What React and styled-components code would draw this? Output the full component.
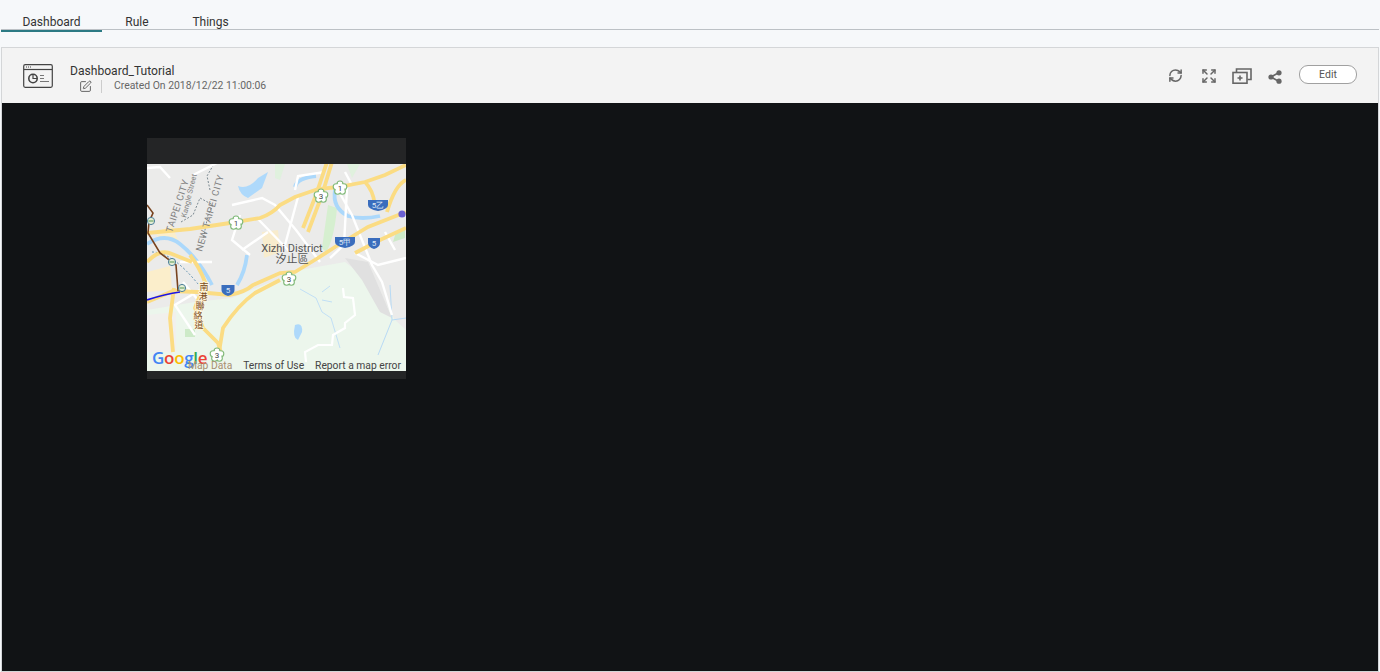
import React from "react";
import styled, { createGlobalStyle } from "styled-components";
import { SquarePen, RefreshCw, Expand } from "lucide-react";

const GlobalStyle = createGlobalStyle`
  html, body {
    margin: 0;
    padding: 0;
    height: 100%;
    background: #f6f8fa;
    font-family: Roboto, "Liberation Sans", sans-serif;
    overflow: hidden;
  }
`;

const Page = styled.div`
  width: 1380px;
  height: 672px;
  display: flex;
  flex-direction: column;
`;

const Tabs = styled.nav`
  display: flex;
  height: 29px;
  margin: 0 1px;
  border-bottom: 1px solid #bcc1c5;
`;

const Tab = styled.div`
  width: ${(p) => p.$width}px;
  height: 32px;
  box-sizing: border-box;
  padding-top: 15px;
  text-align: center;
  font-size: 12px;
  line-height: 15px;
  color: #333;
  border-bottom: 2px solid ${(p) => (p.$active ? "#2b7a84" : "transparent")};
`;

const Panel = styled.section`
  flex: 1;
  margin: 18px 2px 1px 2px;
  display: flex;
  flex-direction: column;
  min-height: 0;
  outline: 1px solid #d4d6d8;
`;

const Header = styled.header`
  height: 55px;
  flex-shrink: 0;
  background: #f3f3f3;
  display: flex;
  align-items: center;
  padding: 0 21px 0 21px;
  box-sizing: border-box;
`;

const Info = styled.div`
  margin-left: 17px;
  display: flex;
  flex-direction: column;
  padding-top: 6px;
`;

const Title = styled.div`
  font-size: 12.1px;
  line-height: 15px;
  color: #333;
`;

const Meta = styled.div`
  display: flex;
  align-items: center;
  padding-left: 9px;
  color: #666;
  font-size: 10.4px;
  line-height: 14px;
`;

const Divider = styled.span`
  width: 1px;
  height: 13px;
  background: #ccc;
  margin: 0 12px 0 9px;
`;

const Actions = styled.div`
  margin-left: auto;
  display: flex;
  align-items: center;
`;

const IconSlot = styled.span`
  width: ${(p) => p.$width}px;
  height: 20px;
  margin-top: ${(p) => p.$top}px;
  display: flex;
  align-items: center;
  justify-content: center;
  color: #666;
`;

const EditButton = styled.button`
  width: 58px;
  height: 19px;
  margin: 0 0 2px 8px;
  padding: 0;
  background: #fff;
  border: 1px solid #a0a0a0;
  border-radius: 9px;
  color: #555;
  font: 10.5px/17px Roboto, "Liberation Sans", sans-serif;
`;

const Canvas = styled.main`
  flex: 1;
  background: #111315;
  padding: 35px 0 0 145px;
  min-height: 0;
`;

const Widget = styled.article`
  width: 259px;
  height: 241px;
  background: #242526;
  padding: 26px 0 8px;
  box-sizing: border-box;
`;

const MapFrame = styled.div`
  position: relative;
  width: 259px;
  height: 207px;
  overflow: hidden;
  font-family: Roboto, "Liberation Sans", sans-serif;
`;

const MapSvg = styled.svg`
  display: block;
`;

const GoogleMark = styled.div`
  position: absolute;
  left: 5px;
  bottom: 3px;
  font: 600 17px/20px "Open Sans", "Liberation Sans", sans-serif;
  letter-spacing: -0.3px;
`;

const Letter = styled.span`
  color: ${(p) => p.$color};
`;

const Attribution = styled.div`
  position: absolute;
  left: 41px;
  right: 5px;
  bottom: -1px;
  height: 12px;
  display: flex;
  justify-content: space-between;
  font-size: 10.3px;
  line-height: 12px;
  color: #444;
`;

const FadedLink = styled.span`
  color: #a88f70;
`;

const DashboardIcon = () => (
  <svg width="30" height="24" viewBox="0 0 30 24" fill="none" stroke="#444" strokeWidth="1.2">
    <rect x="0.7" y="0.7" width="28.6" height="22.6" rx="1.5" />
    <path d="M1 5.5h28" />
    <path d="M3 3h1M5 3h1M7 3h1" />
    <circle cx="10" cy="14.5" r="4.2" strokeWidth="1.6" />
    <path d="M10 10.3v4.2h4" strokeWidth="1.2" />
    <path d="M17 11.5h4M17 14.5h4M17 17.5h9" stroke="#777" />
  </svg>
);

const AddCardIcon = () => (
  <svg width="20" height="16" viewBox="0 0 20 16" fill="none" stroke="#666" strokeWidth="1.6">
    <rect x="1" y="4.5" width="14" height="10.7" />
    <path d="M4.5 4V1h14.5v10.5H15.5" />
    <path d="M8 7.5v5M5.5 10h5" />
  </svg>
);

const ShareIcon = () => (
  <svg width="14" height="14" viewBox="0 0 14 14" fill="#666" stroke="#666">
    <path d="M3 7l8-4.5M3 7l8 4.5" strokeWidth="1.5" />
    <circle cx="3" cy="7" r="2.6" stroke="none" />
    <circle cx="11" cy="2.8" r="2.6" stroke="none" />
    <circle cx="11" cy="11.2" r="2.6" stroke="none" />
  </svg>
);

const YELLOW_ROADS = [
  "M147 233 L190 229 L230 223 L260 218 Q272 214 280 205 L295 197 L318 189 L338 187 L365 182 L385 175 L406 165",
  "M147 302 L173 291 L197 292 L230 295 Q245 292 253 285 L280 273 L295 272 L318 258 L335 247 L368 227 L406 212",
  "M355 253 L380 240 L406 228",
  "M332 162 L322 195 L308 232",
  "M327 162 L316 195 L303 228",
  "M190 255 Q200 268 205 282 L195 308 L203 328 L218 343 L222 356",
  "M280 280 L255 293 Q238 305 223 328 L218 358",
  "M174 288 L170 318 L173 352",
  "M147 262 Q160 248 172 254 L192 262",
  "M365 182 Q373 190 375 205 L380 210",
  "M387 212 Q395 185 406 180",
];

const WHITE_ROADS = [
  "M147 168 L160 167 L170 178 M193 175 L217 163",
  "M232 205 L262 198 L275 205 L296 230 L320 262",
  "M240 215 L232 240 L250 255",
  "M200 290 L175 305 L195 335",
  "M180 262 L212 262 M183 282 L198 300",
  "M257 218 L290 252 M242 250 L268 232",
  "M298 197 L285 245 M338 190 L352 215 L372 265 L382 282 L392 315",
  "M347 188 L344 245 L330 258",
  "M355 253 L378 265 L406 258 M385 232 L395 250",
  "M295 190 L298 176 L325 172 M345 172 L352 185",
];

const BOUNDARY =
  "M343 288 L344 297 L353 298 L355 315 L345 323 L345 328 L333 335 L332 345 L318 345 L305 352 L306 362";

const RIVERS = [
  "M147 244 Q165 232 180 244 Q198 258 212 285",
  "M247 255 Q245 272 237 285",
  "M295 187 Q297 178 316 176",
  "M335 190 Q332 208 348 216 Q362 220 380 216",
];

const SHIELDS = [
  { x: 228, y: 290, label: "5", width: 13 },
  { x: 345, y: 242, label: "5甲", width: 20 },
  { x: 374, y: 243, label: "5", width: 12 },
  { x: 378, y: 205, label: "5乙", width: 20 },
];

const FLOWERS = [
  { x: 236, y: 223, label: "1" },
  { x: 321, y: 196, label: "3" },
  { x: 340, y: 188, label: "1" },
  { x: 289, y: 279, label: "3" },
  { x: 217, y: 355, label: "3" },
];

const STATIONS = [
  [151, 221],
  [172, 262],
  [182, 288],
];

const PETALS = [0, 72, 144, 216, 288];

// stacked, upright road name, it follows the road instead of a straight baseline
const ROAD_NAME = [
  ["南", 204, 290],
  ["港", 203, 299.5],
  ["聯", 200, 309],
  ["絡", 198, 318.5],
  ["道", 199, 328],
];

const Flower = ({ x, y, label }) => (
  <g>
    {PETALS.map((a) => (
      <circle
        key={a}
        cx={x + 4 * Math.sin((a * Math.PI) / 180)}
        cy={y - 4 * Math.cos((a * Math.PI) / 180)}
        r="3"
        fill="#fff"
        stroke="#7fb978"
        strokeWidth="1.1"
      />
    ))}
    <circle cx={x} cy={y} r="4.6" fill="#fff" />
    <text x={x} y={y + 3} fontSize="8" fill="#444" textAnchor="middle">
      {label}
    </text>
  </g>
);

const MapDrawing = () => (
  <MapSvg width="259" height="207" viewBox="147 164 259 207">
    <rect x="147" y="164" width="259" height="207" fill="#ebebea" />
    <path
      d="M147 310 L195 302 L232 298 L300 270 L345 262 L375 285 L395 320 L406 330 L406 371 L147 371 Z"
      fill="#ecf6ec"
    />
    <path d="M345 258 L368 262 L392 318 L380 312 L362 280 Z" fill="#e0e0e0" />
    <path d="M147 315 L176 312 L176 352 L147 352 Z" fill="#f1f0ed" />
    <path d="M155 232 L172 226 L178 240 L160 240 Z" fill="#fbeecb" />
    <path d="M147 272 L170 266 L172 290 L147 292 Z" fill="#fbeecb" />
    <path d="M262 232 L278 230 L280 252 L264 258 Z" fill="#f8eccd" />
    <path d="M322 248 L328 205 L337 208 Q334 240 326 252 Z" fill="#d6efd0" />
    <path d="M275 164 L285 164 L280 180 L275 178 Z M347 164 L360 164 L352 178 Z" fill="#e0f1de" />
    <path d="M396 232 L405 228 L405 238 L393 242 Z" fill="#cdeac8" />
    <path d="M185 329 L195 329 L195 337 L185 337 Z" fill="#cdeac8" />
    <path d="M238 186 Q248 190 258 178 L268 172 L262 188 L248 198 Q240 195 238 186 Z" fill="#aed9fb" />
    <path d="M295 325 Q303 322 302 332 L298 340 Q292 338 295 325 Z" fill="#aed9fb" />
    {RIVERS.map((d) => (
      <path key={d} d={d} fill="none" stroke="#abd8fb" strokeWidth="3.8" />
    ))}
    <path
      d="M300 289 L316 298 L322 312 L331 318 L340 348 M322 292 L330 286 M322 300 L332 302"
      fill="none"
      stroke="#bcdcf6"
      strokeWidth="0.9"
    />
    <path d="M390 285 L392 320 L378 355 M392 320 L406 318" fill="none" stroke="#b8daf5" strokeWidth="1" />
    <path d="M152 252 Q172 252 198 284" fill="none" stroke="#4f86a8" strokeWidth="0.9" strokeDasharray="2 2" />
    <path
      d="M181 222 L193 215 L200 198 L213 205 L208 215 L203 240 M210 190 L207 176 L214 164"
      fill="none"
      stroke="#6f7f88"
      strokeWidth="0.9"
      strokeDasharray="2 1.6"
    />
    {WHITE_ROADS.map((d) => (
      <path key={d} d={d} fill="none" stroke="#fff" strokeWidth="2.4" />
    ))}
    <path d={BOUNDARY} fill="none" stroke="#fff" strokeWidth="2.2" />
    {YELLOW_ROADS.map((d) => (
      <path key={d} d={d} fill="none" stroke="#fbdc83" strokeWidth="3.8" />
    ))}
    <path
      d="M147 205 L153 213 L149 222 L148 233 L160 253 L176 265 L178 291"
      fill="none"
      stroke="#78431f"
      strokeWidth="1.6"
    />
    <path d="M147 300 Q165 294 180 292" fill="none" stroke="#1a14e8" strokeWidth="1.7" />
    {STATIONS.map(([x, y]) => (
      <g key={x}>
        <circle cx={x} cy={y} r="3.6" fill="#e6efd5" stroke="#4b7f9b" strokeWidth="1" />
        <path d={`M${x - 2.6} ${y}h5.2`} stroke="#6da36c" strokeWidth="1.2" />
      </g>
    ))}
    {SHIELDS.map((s) => (
      <g key={s.x}>
        <path
          d={`M${s.x - s.width / 2} ${s.y - 5} H${s.x + s.width / 2} V${s.y} Q${s.x + s.width / 2} ${s.y + 4} ${s.x} ${s.y + 6} Q${s.x - s.width / 2} ${s.y + 4} ${s.x - s.width / 2} ${s.y} Z`}
          fill="#3a6dbd"
        />
        <text x={s.x} y={s.y + 3} fontSize="8" fill="#dfe8f5" textAnchor="middle">
          {s.label}
        </text>
      </g>
    ))}
    {FLOWERS.map((f) => (
      <Flower key={f.x} {...f} />
    ))}
    <circle cx="402" cy="214" r="3.6" fill="#6a5fd0" />
    <g fill="#808080" fontSize="9.5" letterSpacing="0.4">
      <text transform="translate(172 233) rotate(-72)">TAIPEI CITY</text>
      <text transform="translate(202 252) rotate(-74)">NEW TAIPEI CITY</text>
    </g>
    <text transform="translate(186 218) rotate(-76)" fontSize="7.5" fill="#808080">
      Kangle Street
    </text>
    <g
      fontSize="9"
      fill="#7a4a20"
      stroke="#fff6dc"
      strokeWidth="1.6"
      paintOrder="stroke"
      fontFamily="'Noto Sans CJK TC', sans-serif"
      textAnchor="middle"
    >
      {ROAD_NAME.map(([ch, x, y]) => (
        <text key={ch} x={x} y={y}>
          {ch}
        </text>
      ))}
    </g>
    <text x="292" y="252" fontSize="11" fill="#555" textAnchor="middle">
      Xizhi District
    </text>
    <text x="292" y="263" fontSize="11" fill="#555" textAnchor="middle" fontFamily="'Noto Sans CJK TC', sans-serif">
      汐止區
    </text>
  </MapSvg>
);

export default function App() {
  return (
    <Page>
      <GlobalStyle />
      <Tabs>
        <Tab $width={101} $active>
          Dashboard
        </Tab>
        <Tab $width={70}>Rule</Tab>
        <Tab $width={77}>Things</Tab>
      </Tabs>
      <Panel>
        <Header>
          <DashboardIcon />
          <Info>
            <Title>Dashboard_Tutorial</Title>
            <Meta>
              <SquarePen size={13} strokeWidth={1.5} color="#444" />
              <Divider />
              Created On 2018/12/22 11:00:06
            </Meta>
          </Info>
          <Actions>
            <IconSlot $width={34} $top={0}>
              <RefreshCw size={15} strokeWidth={2.4} />
            </IconSlot>
            <IconSlot $width={33} $top={0}>
              <Expand size={16} strokeWidth={2.2} />
            </IconSlot>
            <IconSlot $width={33} $top={0}>
              <AddCardIcon />
            </IconSlot>
            <IconSlot $width={33} $top={3}>
              <ShareIcon />
            </IconSlot>
            <EditButton>Edit</EditButton>
          </Actions>
        </Header>
        <Canvas>
          <Widget>
            <MapFrame>
              <MapDrawing />
              <GoogleMark>
                <Letter $color="#4285f4">G</Letter>
                <Letter $color="#ea4335">o</Letter>
                <Letter $color="#fbbc05">o</Letter>
                <Letter $color="#4285f4">g</Letter>
                <Letter $color="#34a853">l</Letter>
                <Letter $color="#ea4335">e</Letter>
              </GoogleMark>
              <Attribution>
                <FadedLink>Map Data</FadedLink>
                <span>Terms of Use</span>
                <span>Report a map error</span>
              </Attribution>
            </MapFrame>
          </Widget>
        </Canvas>
      </Panel>
    </Page>
  );
}
